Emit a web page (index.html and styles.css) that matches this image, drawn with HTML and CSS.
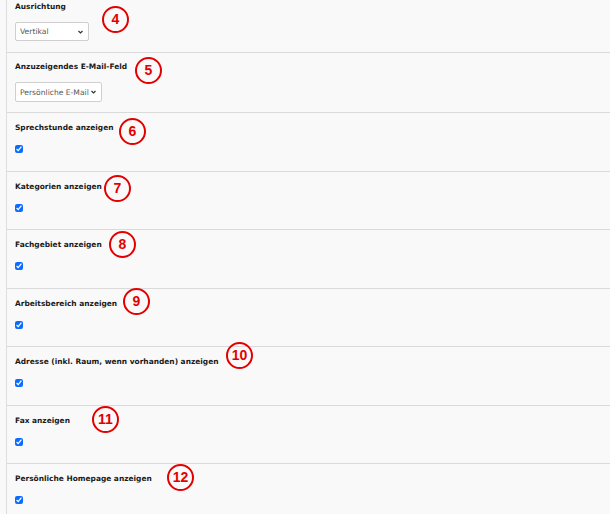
FILE: index.html
```html
<!DOCTYPE html>
<html lang="de">
<head>
    <meta charset="UTF-8">
    <meta name="viewport" content="width=device-width, initial-scale=1.0">
    <title>Einstellungen</title>
    <link rel="stylesheet" href="styles.css">
</head>
<body>
    <div class="panel">
        <div class="row row-first">
            <label class="label">Ausrichtung</label>
            <div class="select-wrap select-short">
                <select class="select">
                    <option>Vertikal</option>
                </select>
                <svg class="chevron" viewBox="0 0 10 6"><path d="M1 1 L5 5 L9 1" /></svg>
            </div>
            <span class="marker m4">4</span>
        </div>
        <div class="row row-select">
            <label class="label">Anzuzeigendes E-Mail-Feld</label>
            <div class="select-wrap select-long">
                <select class="select">
                    <option>Persönliche E-Mail</option>
                </select>
                <svg class="chevron" viewBox="0 0 10 6"><path d="M1 1 L5 5 L9 1" /></svg>
            </div>
            <span class="marker m5">5</span>
        </div>
        <div class="row">
            <label class="label">Sprechstunde anzeigen</label>
            <input type="checkbox" class="check" checked>
            <span class="marker m6">6</span>
        </div>
        <div class="row">
            <label class="label">Kategorien anzeigen</label>
            <input type="checkbox" class="check" checked>
            <span class="marker m7">7</span>
        </div>
        <div class="row">
            <label class="label">Fachgebiet anzeigen</label>
            <input type="checkbox" class="check" checked>
            <span class="marker m8">8</span>
        </div>
        <div class="row">
            <label class="label">Arbeitsbereich anzeigen</label>
            <input type="checkbox" class="check" checked>
            <span class="marker m9">9</span>
        </div>
        <div class="row">
            <label class="label">Adresse (inkl. Raum, wenn vorhanden) anzeigen</label>
            <input type="checkbox" class="check" checked>
            <span class="marker m10">10</span>
        </div>
        <div class="row">
            <label class="label">Fax anzeigen</label>
            <input type="checkbox" class="check" checked>
            <span class="marker m11">11</span>
        </div>
        <div class="row">
            <label class="label">Persönliche Homepage anzeigen</label>
            <input type="checkbox" class="check" checked>
            <span class="marker m12">12</span>
        </div>
    </div>
</body>
</html>
```
FILE: styles.css
```css
body {
    margin: 0;
    background-color: #f9f9f9;
    font-family: "DejaVu Sans", Verdana, sans-serif;
    overflow: hidden;
}
.panel {
    margin-left: 6px;
    border-left: 1px solid #dedede;
    min-height: 514px;
}
.row {
    position: relative;
    display: flex;
    flex-direction: column;
    align-items: flex-start;
    padding: 10px 0 17.5px 8px;
    border-bottom: 1px solid #dadada;
}
.row-first {
    padding-top: 2px;
    padding-bottom: 11px;
}
.row-select {
    padding-top: 9px;
    padding-bottom: 10px;
}
.label {
    font-size: 7.45px;
    line-height: 10px;
    font-weight: bold;
    color: #1a1a1a;
}
.select-wrap {
    position: relative;
    margin-top: 10px;
}
.select {
    display: block;
    appearance: none;
    -webkit-appearance: none;
    margin: 0;
    height: 19px;
    padding: 0 0 0 4px;
    border: 1px solid #cfcfcf;
    border-radius: 2px;
    background-color: #fff;
    font-family: "DejaVu Sans", Verdana, sans-serif;
    font-size: 7.6px;
    color: #555;
}
.select-short .select {
    width: 74px;
}
.select-long .select {
    width: 87px;
    height: 20px;
}
.chevron {
    position: absolute;
    top: 8px;
    right: 6px;
    width: 5px;
    height: 4px;
    fill: none;
    stroke: #333;
    stroke-width: 2.4;
}
.check {
    margin: 12px 0 0 0;
    width: 8px;
    height: 8px;
    accent-color: #0b6cff;
}
.marker {
    position: absolute;
    width: 23px;
    height: 23px;
    border: 2px solid #e30000;
    border-radius: 50%;
    font-family: "Liberation Sans", Arial, sans-serif;
    font-weight: bold;
    font-size: 14px;
    line-height: 23px;
    text-align: center;
    color: #e30000;
}
.m4 { left: 95px; top: 6px; }
.m5 { left: 128px; top: 4px; }
.m6 { left: 112px; top: 5px; }
.m7 { left: 97px; top: 3px; }
.m8 { left: 102px; top: 1px; }
.m9 { left: 116px; top: -1px; }
.m10 { left: 219px; top: -5px; }
.m11 { left: 85px; top: 0; }
.m12 { left: 160px; top: 0; }
```
